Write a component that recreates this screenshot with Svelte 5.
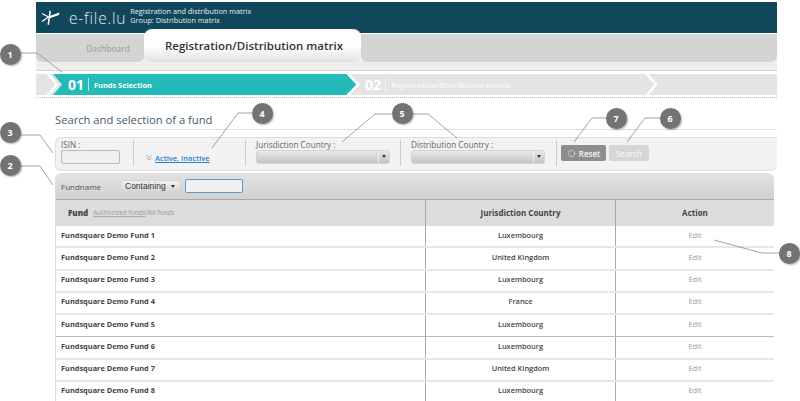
<script>
	const funds = [
		['Fundsquare Demo Fund 1', 'Luxembourg'],
		['Fundsquare Demo Fund 2', 'United Kingdom'],
		['Fundsquare Demo Fund 3', 'Luxembourg'],
		['Fundsquare Demo Fund 4', 'France'],
		['Fundsquare Demo Fund 5', 'Luxembourg'],
		['Fundsquare Demo Fund 6', 'Luxembourg'],
		['Fundsquare Demo Fund 7', 'United Kingdom'],
		['Fundsquare Demo Fund 8', 'Luxembourg']
	];

	// callout badges: number, centre x/y
	const badges = [
		[1, 10, 54],
		[2, 10, 165],
		[3, 10, 132],
		[4, 262, 113],
		[5, 402, 113],
		[6, 670, 118],
		[7, 616, 118],
		[8, 789, 253]
	];

	// leader lines drawn over the page
	const leaders = [
		'M20 53H37L62 72',
		'M20 166H40L53 185',
		'M20 135H40L53 153',
		'M252 113H238L212 148',
		'M392 114H375L342 142',
		'M412 114H428L457 138',
		'M606 118H592L574 142',
		'M660 118H645L627 142',
		'M780 253H762L714 240'
	];
</script>

<div class="page">
	<header class="brand">
		<svg class="logo" viewBox="0 0 20 16" width="20" height="16">
			<path d="M7 6.500L18.500 2.500L18 5L8 8.500Z" fill="#fff" />
			<path d="M8.500 0.500L10 1L8 15L6.500 14.500Z" fill="#fff" />
			<path d="M1 3.500L7.500 7M1 11.500L7.500 7" fill="none" stroke="#fff" stroke-width="1.300" />
		</svg>
		<span class="site">e-file.lu</span>
		<div class="crumb">
			<div>Registration and distribution matrix</div>
			<div>Group: Distribution matrix</div>
		</div>
	</header>

	<nav class="tabs">
		<span class="tab">Dashboard</span>
		<span class="tab active">Registration/Distribution matrix</span>
		<span class="tab rest"></span>
	</nav>

	<div class="band"></div>

	<div class="steps-wrap">
		<div class="steps">
			<svg class="chevrons" viewBox="0 0 741 21" width="741" height="21">
				<path d="M17 0H311L322 10.500L311 21H17L26 10.500Z" fill="#22bbb7" />
				<path d="M11 -1L21 10.500L11 22" fill="none" stroke="#fff" stroke-width="2.500" />
				<path d="M311 -1L322 10.500L311 22" fill="none" stroke="#fff" stroke-width="2.500" />
				<path d="M610 -1L620 10.500L610 22" fill="none" stroke="#fff" stroke-width="2.500" />
			</svg>
			<div class="step first"><b>01</b><i></i><span>Funds Selection</span></div>
			<div class="step second"><b>02</b><i></i><span>Registration/Distribution matrix</span></div>
		</div>
	</div>

	<main class="content">
		<h1>Search and selection of a fund</h1>

		<section class="filters">
			<div class="field isin">
				<label for="isin">ISIN :</label>
				<input id="isin" />
			</div>
			<div class="field status">
				<svg class="arrows" viewBox="0 0 6 6" width="6" height="6">
					<path d="M0.500 0.500L3 2.500L5.500 0.500M0.500 3L3 5L5.500 3" fill="none" stroke="#999" stroke-width="0.800" />
				</svg>
				<a href="#status">Active, Inactive</a>
			</div>
			<div class="field country juris">
				<span class="label">Jurisdiction Country :</span>
				<div class="select wide"><em></em></div>
			</div>
			<div class="field country">
				<span class="label">Distribution Country :</span>
				<div class="select wide"><em></em></div>
			</div>
			<div class="actions">
				<span class="btn reset">
					<svg viewBox="0 0 10 10" width="9" height="9">
						<circle cx="5" cy="5" r="3.500" fill="none" stroke="#fff" stroke-width="1" stroke-dasharray="1.500 1" />
					</svg>
					Reset
				</span>
				<span class="btn search">Search</span>
			</div>
		</section>

		<section class="results">
			<div class="name-filter">
				<span class="fname">Fundname</span>
				<div class="select small"><span>Containing</span><em></em></div>
				<input class="focus" />
			</div>
			<div class="row head">
				<div class="c1"><b>Fund</b><small><u>Authorized funds</u>/All funds</small></div>
				<div class="c2">Jurisdiction Country</div>
				<div class="c3">Action</div>
			</div>
			{#each funds as f, i}
				<div class="row" class:dark={i === 4}>
					<div class="c1 fund">{f[0]}</div>
					<div class="c2">{f[1]}</div>
					<div class="c3 edit">Edit</div>
				</div>
			{/each}
		</section>
	</main>

	<svg class="leaders" viewBox="0 0 800 401" width="800" height="401">
		{#each leaders as d}
			<path {d} fill="none" stroke="#8a8a8a" stroke-width="0.800" />
		{/each}
	</svg>
	{#each badges as b}
		<span class="badge" style="left:{b[1] - 10.500}px;top:{b[2] - 10.500}px">{b[0]}</span>
	{/each}
</div>

<style>
	:global(body) {
		margin: 0;
		background: #fff;
	}

	.page {
		position: relative;
		width: 800px;
		height: 401px;
		overflow: hidden;
		font-family: 'Open Sans', sans-serif;
		color: #444;
	}

	.brand {
		display: flex;
		align-items: center;
		height: 31px;
		margin: 2px 23px 0 36px;
		background: #10475a;
		color: #fff;
	}

	.logo {
		margin-left: 5px;
	}

	.site {
		margin-left: 8px;
		font-size: 15.500px;
		letter-spacing: 0.800px;
		color: #e4edf0;
		font-weight: 300;
	}

	.crumb {
		margin-left: 4px;
		margin-top: -3px;
		font-size: 7.300px;
		line-height: 8.700px;
		color: #e8eef0;
	}

	.tabs {
		display: flex;
		align-items: flex-end;
		height: 28px;
		margin: 1px 23px 0 36px;
		background: #eeeeee;
	}

	.tab {
		display: flex;
		align-items: center;
		justify-content: flex-end;
		width: 108px;
		height: 28px;
		padding-right: 14px;
		box-sizing: border-box;
		font-size: 8.500px;
		color: #9a9a9a;
		background: #d4d4d4;
		border-radius: 0 0 6px 6px;
	}

	.tab.active {
		justify-content: center;
		width: 217px;
		height: 33px;
		padding: 0 0 0 3px;
		font-size: 11.500px;
		font-weight: 600;
		color: #333;
		background: linear-gradient(#fff 50%, #e2e2e2);
		border-radius: 8px 8px 6px 6px;
	}

	.tab.rest {
		flex: 1;
		padding: 0;
	}

	.band {
		height: 8px;
		margin: 0 23px 0 36px;
		background: #eeeeee;
		border-bottom: 1px dotted #bbb;
	}

	.steps-wrap {
		margin: 0 23px 0 36px;
		padding: 3px 0 2px;
		border-bottom: 1px dotted #bbb;
	}

	.steps {
		position: relative;
		display: flex;
		height: 21px;
		background: #e4e4e4;
	}

	.chevrons {
		position: absolute;
		left: 0;
		top: 0;
	}

	.step {
		position: relative;
		display: flex;
		align-items: center;
		color: #fff;
	}

	.step b {
		font-size: 14px;
		font-weight: 700;
	}

	.step i {
		width: 1px;
		height: 13px;
		margin: 0 5px 0 4px;
		background: #ffffffaa;
	}

	.step span {
		font-size: 7.400px;
		font-weight: 700;
	}

	.step.first {
		margin-left: 32px;
		width: 297px;
	}

	.step.second span {
		color: #f6f6f6;
	}

	.content {
		margin-left: 55px;
		width: 722px;
	}

	h1 {
		margin: 14px 0 0;
		padding-bottom: 1px;
		font-size: 11.200px;
		line-height: 16px;
		font-weight: 500;
		color: #3f5a70;
		border-bottom: 1px solid #e0e0e0;
	}

	.filters {
		display: flex;
		align-items: stretch;
		height: 34px;
		margin-top: 7px;
		padding: 2px 0 4px;
		box-sizing: border-box;
		background: #f2f2f2;
		border: 1px solid #ddd;
		border-right: 0;
		border-radius: 6px 0 6px 6px;
	}

	.field {
		display: flex;
		flex-direction: column;
		font-size: 8.200px;
		color: #666;
		box-sizing: border-box;
	}

	.field label,
	.label {
		line-height: 10px;
	}

	.isin {
		width: 78px;
		padding-left: 5px;
		border-right: 1px solid #ccc;
	}

	.isin input {
		width: 59px;
		height: 14px;
		padding: 0;
		box-sizing: border-box;
		background: #f0f0f0;
		border: 1px solid #bbb;
		border-radius: 2px;
	}

	.status {
		flex-direction: row;
		align-items: center;
		gap: 3px;
		width: 112px;
		padding: 9px 0 0 12px;
		border-right: 1px solid #ccc;
	}

	.status a {
		font-size: 7.500px;
		font-weight: 600;
		color: #2d7fd0;
	}

	.country {
		width: 156px;
		padding-left: 10px;
		border-right: 1px solid #ccc;
	}

	.country.juris {
		width: 155px;
	}

	.select {
		position: relative;
		display: flex;
		align-items: center;
		height: 14px;
		box-sizing: border-box;
		background: linear-gradient(#e8e8e8, #c4c4c4);
		border: 1px solid #d4d4d4;
		border-radius: 3px;
	}

	.select em {
		position: absolute;
		right: 3px;
		top: 4px;
		border: 2px solid transparent;
		border-top: 3px solid #333;
		border-bottom: 0;
	}

	.select.wide {
		width: 134px;
	}

	.select.wide::after {
		content: '';
		position: absolute;
		right: 10px;
		top: 0;
		bottom: 0;
		border-left: 1px solid #eee;
	}

	.actions {
		display: flex;
		align-items: center;
		gap: 3px;
		padding-left: 4px;
	}

	.btn {
		display: flex;
		align-items: center;
		justify-content: center;
		gap: 3px;
		height: 16px;
		font-size: 8px;
		font-weight: 600;
		color: #f4f4f4;
		border-radius: 2px;
	}

	.reset {
		width: 45px;
		background: #8e8e8e;
	}

	.search {
		width: 40px;
		background: #d6d6d6;
	}

	.results {
		width: 719px;
		margin-top: 2px;
		border-left: 1px solid #ddd;
		border-radius: 6px 6px 0 0;
		box-sizing: border-box;
	}

	.name-filter {
		display: flex;
		align-items: center;
		height: 27px;
		padding-left: 5px;
		background: linear-gradient(#e2e2e2, #d2d2d2);
		border-bottom: 1px solid #aaa;
		border-radius: 6px 6px 0 0;
		box-sizing: border-box;
	}

	.fname {
		width: 59px;
		font-size: 8px;
		color: #555;
	}

	.select.small {
		width: 61px;
		height: 13px;
		padding-left: 4px;
		font-family: 'Liberation Sans', sans-serif;
		font-size: 8.500px;
		color: #333;
		background: linear-gradient(#f0f0f0, #d4d4d4);
	}

	.select.small em {
		right: 5px;
	}

	.focus {
		width: 58px;
		height: 14px;
		margin-left: 4px;
		padding: 0;
		box-sizing: border-box;
		background: #f0f0f0;
		border: 1px solid #5b9bd5;
		border-radius: 2px;
	}

	.row {
		display: grid;
		grid-template-columns: 369px 190px 1fr;
		height: 22.250px;
		box-sizing: border-box;
		border-bottom: 2px solid #e6e6e6;
		font-size: 7.400px;
		font-weight: 600;
		color: #444;
		background: #fff;
	}

	.row.dark {
		border-bottom: 1px solid #bbb;
	}

	.row > div {
		display: flex;
		align-items: center;
		justify-content: center;
		padding-bottom: 3px;
	}

	.row .c2,
	.row .c3 {
		border-left: 1px solid #a8a8a8;
	}

	.row .fund {
		justify-content: flex-start;
		padding-left: 5px;
		font-weight: 700;
	}

	.row .edit {
		font-weight: 400;
		color: #999;
	}

	.row.head {
		height: 26px;
		font-size: 8px;
		font-weight: 700;
		background: #dcdcdc;
		border-bottom: 0;
	}

	.row.head > div {
		padding-bottom: 2px;
	}

	.row.head .c1 {
		justify-content: flex-start;
		padding-left: 12px;
		gap: 5px;
	}

	.row.head small {
		font-size: 6.300px;
		font-weight: 600;
		color: #aaa;
	}

	.leaders {
		position: absolute;
		left: 0;
		top: 0;
		pointer-events: none;
	}

	.badge {
		position: absolute;
		display: flex;
		align-items: center;
		justify-content: center;
		width: 21px;
		height: 21px;
		font-size: 9px;
		font-weight: 700;
		color: #fff;
		background: #737373;
		border-radius: 50%;
		box-shadow: 1px 1px 2px #0005;
	}
</style>
